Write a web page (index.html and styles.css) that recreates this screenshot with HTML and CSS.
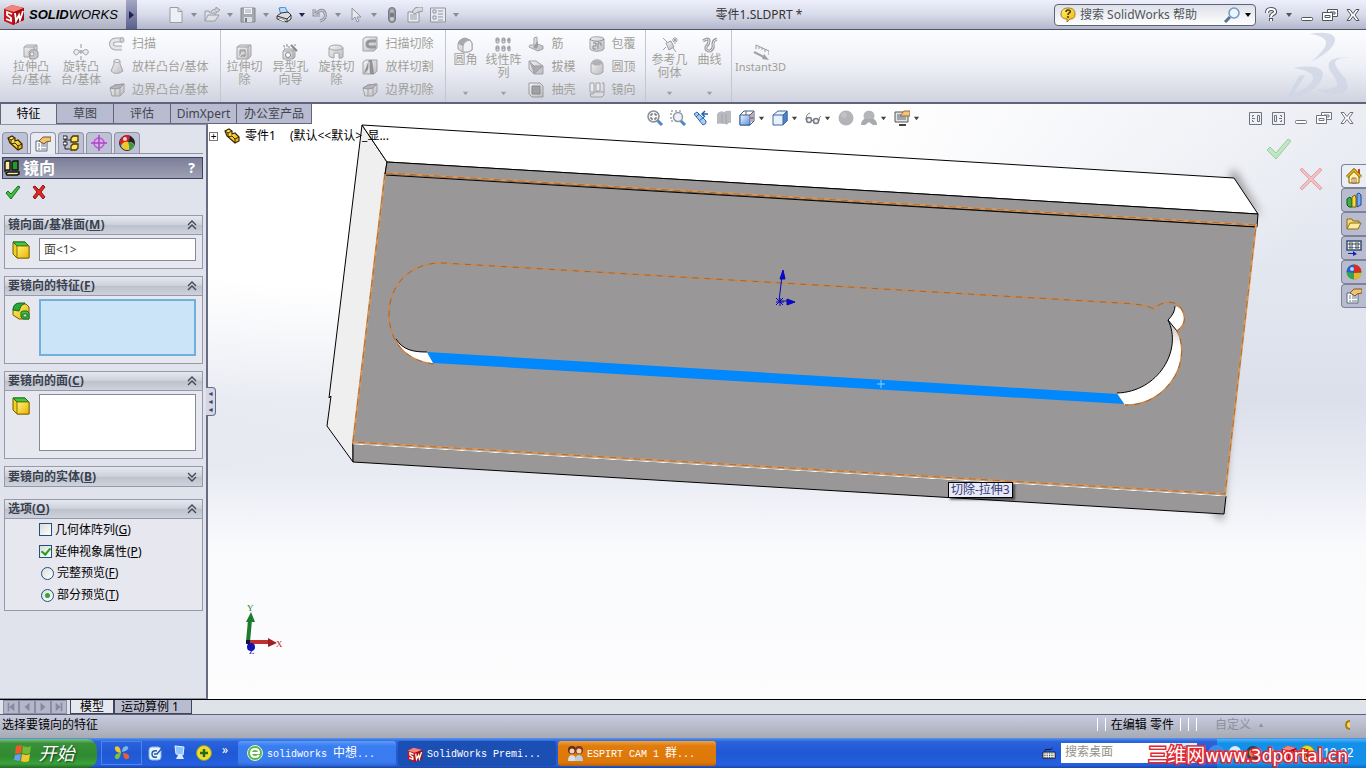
FILE: index.html
```html
<!DOCTYPE html>
<html lang="zh-CN">
<head>
    <meta charset="UTF-8">
    <meta name="viewport" content="width=device-width, initial-scale=1.0">
    <title>零件1.SLDPRT *</title>
    <link rel="stylesheet" href="styles.css">
</head>
<body>
    <!-- icon set -->
    <svg class="defs" aria-hidden="true">
        <defs>
            <linearGradient id="gold" x1="0" y1="0" x2="1" y2="1"><stop offset="0" stop-color="#fff27a"/><stop offset="1" stop-color="#eab400"/></linearGradient>
            <linearGradient id="gray" x1="0" y1="0" x2="1" y2="1"><stop offset="0" stop-color="#f4f4f4"/><stop offset="1" stop-color="#bcbcc0"/></linearGradient>
            <linearGradient id="blue" x1="0" y1="0" x2="1" y2="1"><stop offset="0" stop-color="#f2f8ff"/><stop offset="1" stop-color="#5b91dc"/></linearGradient>
        </defs>
        <symbol id="sw" viewBox="0 0 22 22"><path d="M1 5 9 1l12 3v12l-11 5-9-4z" fill="#c4161c"/><path d="M1 5 9 1l12 3-10 4z" fill="#f0857e"/><path d="M11 8 21 4v12l-11 5z" fill="#a30d12"/><path d="M9 10 4 8v3l4 3v3l-5-2M12 9l1 8 3-6 1 5 3-9" fill="none" stroke="#fff" stroke-width="1.800"/></symbol>
        <symbol id="down" viewBox="0 0 8 8"><path d="M1 2h6L4 6z" fill="currentColor"/></symbol>
        <symbol id="new" viewBox="0 0 16 16"><path d="M2 .5h8l4 4v11H2z" fill="#eef0f6" stroke="#9a9ca6"/><path d="M10 .5v4h4" fill="none" stroke="#9a9ca6"/></symbol>
        <symbol id="open" viewBox="0 0 16 16"><path d="M1 14V4h4l1 2h5v2M1 14l3-6h11l-4 6z" fill="#dfe0e6" stroke="#9a9ca6"/><path d="M7 5q1-3 5-3V0l4 3-4 3V4" fill="#d0d2da" stroke="#9a9ca6"/></symbol>
        <symbol id="save" viewBox="0 0 16 16"><path d="M1 1h14v14H1z" fill="#a6a8b2" stroke="#858791"/><path d="M4 1h8v6H4z" fill="#f0f1f6"/><path d="M4 10h8v5H4z" fill="#dcdde4"/><path d="M5 11h2v4H5z" fill="#777984"/><path d="M5 3h6M5 5h6" stroke="#aaa"/></symbol>
        <symbol id="print" viewBox="0 0 16 16"><path d="m3 1 6-1 3 6-7 2z" fill="#b8dcff" stroke="#4488c8"/><path d="m1 9 4-3 7-1 3 3v4l-4 3-10-3z" fill="#dcdde0" stroke="#333"/><path d="m1 9 10 3 4-4M11 12v3" fill="none" stroke="#333"/><path d="m3 11 6 2v2l-6-2z" fill="#fff" stroke="#555" stroke-width=".5"/></symbol>
        <symbol id="undo" viewBox="0 0 16 16"><path d="M2 2v6h6M3 7q8-7 10-1t-5 8" fill="none" stroke="#90929c" stroke-width="3"/><path d="M2 2v6h6M3 7q8-7 10-1t-5 8" fill="none" stroke="#d2d4de"/></symbol>
        <symbol id="cursor" viewBox="0 0 16 16"><path d="M4 1v12l3-3 2 5 2-1-2-4h4z" fill="#e6e8f0" stroke="#9294a0"/></symbol>
        <symbol id="light" viewBox="0 0 16 16"><rect x="4.500" y=".5" width="7" height="15" rx="3.500" fill="#92949c" stroke="#777985"/><circle cx="8" cy="4" r="2" fill="#b0b2ba"/><circle cx="8" cy="8" r="2" fill="#74767e"/><circle cx="8" cy="12" r="2" fill="#c8cad2"/></symbol>
        <symbol id="propgray" viewBox="0 0 16 16"><path d="M1 5h11v10H1z" fill="#eceef4" stroke="#92949e"/><path d="M3 8h7M3 10h7M3 12h7" stroke="#9a9ca6"/><path d="m5 5 3-4 3-1h5v4l-5 1-3 2z" fill="#d8dae0" stroke="#92949e"/></symbol>
        <symbol id="list" viewBox="0 0 16 16"><path d="M.5 1h15v14H.5z" fill="#e8eaf2" stroke="#9092a0"/><path d="M3 3h3v3H3zM3 9h3v3H3z" fill="none" stroke="#9092a0"/><path d="M8 4h5M8 7h5M8 10h5M8 13h5" stroke="#9092a0"/></symbol>
        <symbol id="lens" viewBox="0 0 16 16"><path d="m1 15 5-5" stroke="#5b7290" stroke-width="3"/><circle cx="10" cy="6" r="5" fill="#e7f6ff" stroke="#7896b8" stroke-width="1.500"/></symbol>
        <symbol id="tip" viewBox="0 0 16 16"><path d="M8 1c5 0 7 2 7 6s-2 5-5 5l-3 3v-3C3 12 1 10 1 7s2-6 7-6z" fill="url(#gold)" stroke="#a87a16"/><path d="M6 5q0-2 2-2c3 0 3 2 1 3q-1 1-1 2m0 1v2" fill="none" stroke="#4b3505" stroke-width="1.500"/></symbol>
        <symbol id="help" viewBox="0 0 16 16"><path d="M4 6q0-4 4-4c5 0 5 4 2 5q-2 1-2 3m0 1v3" fill="none" stroke="#50545e" stroke-width="4"/><path d="M4 6q0-4 4-4c5 0 5 4 2 5q-2 1-2 3m0 2v2" fill="none" stroke="#fff" stroke-width="2"/></symbol>
        <symbol id="min" viewBox="0 0 16 16"><rect x="2.500" y="10.500" width="11" height="3" rx="1" fill="#fff" stroke="currentColor"/></symbol>
        <symbol id="restore" viewBox="0 0 16 16"><path d="M5.500 2.500h10v7h-10z" fill="#fff" stroke="currentColor"/><path d="M8 5h5v2H8z" fill="none" stroke="currentColor"/><path d="M.5 5.500h10v8H.5z" fill="#fff" stroke="currentColor"/><path d="M3 8.500h5v2H3z" fill="none" stroke="currentColor"/></symbol>
        <symbol id="close" viewBox="0 0 16 16"><path d="M2 2.500h3l3 4 3-4h3L10 8l4 5.500h-3l-3-4-3 4H2L6 8z" fill="#fff" stroke="currentColor"/></symbol>
        <symbol id="paneleft" viewBox="0 0 16 16"><path d="M2.500 2.500h12v12h-12z" fill="none" stroke="currentColor"/><path d="M7 5.500H5.500V7M5.500 10v1.500H7M5 8.500h3M10.500 5.500h2v6h-2z" fill="none" stroke="currentColor"/></symbol>
        <symbol id="paneright" viewBox="0 0 16 16"><path d="M2.500 2.500h12v12h-12z" fill="none" stroke="currentColor"/><path d="M10 5.500h1.500V7M11.500 10v1.500H10M12 8.500H9M4.500 5.500h2v6h-2z" fill="none" stroke="currentColor"/></symbol>

        <symbol id="boss" viewBox="0 0 16 16"><path d="m1 3 3-2h10v10l-3 2H1z" fill="url(#gray)" stroke="#a6a6a8"/><path d="M1 3h10v10M11 3l3-2" fill="none" stroke="#a6a6a8"/><path d="m6 8 2-2h5l2 2v5l-3 2H7z" fill="#c8c8cc" stroke="#98989c"/><circle cx="9" cy="10" r="2" fill="#ececf0" stroke="#a0a0a4"/></symbol>
        <symbol id="revolve" viewBox="0 0 16 16"><path d="M8 0v4m0 2v4m0 2v4" stroke="#98989c"/><path d="M6 7C3 4 0 6 1 9s4 2 5-1h4c1 3 4 4 5 1s-2-5-5-2z" fill="#ececf0" stroke="#9c9ca0"/></symbol>
        <symbol id="sweep" viewBox="0 0 16 16"><path d="M13 4H7C1 4 1 12 7 12h6" fill="none" stroke="#a8a8ac" stroke-width="5"/><path d="M13 4H7C1 4 1 12 7 12h6" fill="none" stroke="#e6e6ea" stroke-width="3"/><ellipse cx="13" cy="4" rx="2" ry="2.500" fill="#d4d4d8" stroke="#a8a8ac"/></symbol>
        <symbol id="loft" viewBox="0 0 16 16"><path d="M5 2v3L2 12q5 5 12 0l-3-7V2z" fill="url(#gray)" stroke="#a6a6aa"/><ellipse cx="8" cy="2" rx="3" ry="1.500" fill="#f4f4f6" stroke="#a6a6aa"/></symbol>
        <symbol id="boundary" viewBox="0 0 16 16"><path d="m1 6 5-3 9-1v8l-4 4H3z" fill="url(#gray)" stroke="#a0a0a4"/><path d="M1 6q5 2 10 0l4-4-9 1z" fill="#b4b4ba" stroke="#98989e"/><path d="M11 6v8M6 7v7" fill="none" stroke="#a0a0a6"/></symbol>
        <symbol id="cut" viewBox="0 0 16 16"><path d="m1 3 3-2h11v11l-3 3H1z" fill="url(#gray)" stroke="#a2a2a6"/><path d="M1 3h11v12M12 3l3-2" fill="none" stroke="#a2a2a6"/><path d="M4 6h5v6H4z" fill="#bebec4" stroke="#909096"/><path d="m4 12 2-3h3" fill="none" stroke="#eee"/></symbol>
        <symbol id="hole" viewBox="0 0 16 16"><path d="m1 7 2-2h10v8l-2 2H1z" fill="url(#gray)" stroke="#a2a2a6"/><path d="M1 7h10v8M11 7l2-2" fill="none" stroke="#a2a2a6"/><circle cx="6" cy="11" r="2.500" fill="#fff" stroke="#88888e"/><path d="m9 1 6 6" stroke="#86868c" stroke-width="2"/><path d="M1 2h2M5 0v3M6 3h2M12 1h2M2 4h1" stroke="#86868c"/></symbol>
        <symbol id="revcut" viewBox="0 0 16 16"><path d="M1 4c0-4 14-4 14 0v9q-2 2-4 1V9H6v5q-3 0-5-2z" fill="url(#gray)" stroke="#a4a4a8"/><path d="M1 4c2 3 12 3 14 0" fill="none" stroke="#a4a4a8"/></symbol>
        <symbol id="sweepcut" viewBox="0 0 16 16"><path d="m1 3 3-2h11v11l-3 3H1z" fill="url(#gray)" stroke="#a2a2a6"/><path d="M14 5H9Q5 5 5 8t4 3h5" fill="none" stroke="#96969c" stroke-width="3"/></symbol>
        <symbol id="loftcut" viewBox="0 0 16 16"><path d="m1 3 3-2h11v11l-3 3H1z" fill="url(#gray)" stroke="#a2a2a6"/><path d="M7 1h3l2 14H8L7 9l-4 5H2z" fill="#909096"/><path d="M7 3v11" stroke="#f4f4f4"/></symbol>
        <symbol id="fillet" viewBox="0 0 16 16"><path d="M1 7Q2 2 8 1l5 2 2 3v7l-4 2H5l-4-3z" fill="url(#gray)" stroke="#a0a0a4"/><path d="M1 7Q2 2 8 1l5 2q-6 0-7 6z" fill="#a8a8ae"/><path d="M6 15V9q1-5 7-6l2 3v7l-4 2z" fill="#f2f2f4" stroke="#a4a4a8"/></symbol>
        <symbol id="pattern" viewBox="0 0 16 16"><g fill="#dddde2" stroke="#929298"><rect x="1" y="1" width="3" height="5" rx="1"/><rect x="7" y="1" width="3" height="5" rx="1"/><rect x="13" y="1" width="2" height="5" rx="1"/><rect x="1" y="9" width="3" height="5" rx="1"/><rect x="7" y="9" width="3" height="5" rx="1"/><rect x="13" y="9" width="2" height="5" rx="1"/></g><path d="M1 3h3M7 3h3M12 3h3M1 11h3M7 11h3M12 11h3" stroke="#88888e"/></symbol>
        <symbol id="rib" viewBox="0 0 16 16"><path d="M6 9V2l3-1v7l6 2v3l-5 2-9-4 1-2z" fill="url(#gray)" stroke="#a2a2a6"/><path d="m5 11 5-6v6l-2 2z" fill="#9c9ca2"/></symbol>
        <symbol id="draft" viewBox="0 0 16 16"><path d="M1 2h7l7 5v8H6L1 10z" fill="url(#gray)" stroke="#a0a0a4"/><path d="M1 2 6 7v8M6 7h9L6 15" fill="#aaaab0" stroke="#a0a0a4"/></symbol>
        <symbol id="shell" viewBox="0 0 16 16"><path d="M1 1h11l3 3v11H4l-3-3z" fill="url(#gray)" stroke="#98989e"/><path d="M4 4h8v8H4z" fill="#a0a0a6" stroke="#88888e"/></symbol>
        <symbol id="wrap" viewBox="0 0 16 16"><path d="M1 3c0-3 14-3 14 0v10c-2 3-12 3-14 0z" fill="url(#gray)" stroke="#a4a4a8"/><path d="M1 3c2 3 12 3 14 0M4 7h3v3H4v3h3m2 0V7h3v3" fill="none" stroke="#88888e"/></symbol>
        <symbol id="dome" viewBox="0 0 16 16"><path d="M2 6c0-7 12-7 12 0v7c-2 3-10 3-12 0z" fill="url(#gray)" stroke="#a4a4a8"/><path d="M3 5c0-5 10-5 10 0q-5 3-10 0" fill="#b0b0b6"/></symbol>
        <symbol id="mirror" viewBox="0 0 16 16"><path d="M1 1h4v9H1zM7 1h4v8H7z" fill="#ececf0" stroke="#a0a0a6"/><path d="M1 12h3l2-2h9v3l-2 2H2zM13 1h2v9" fill="#dcdce0" stroke="#a0a0a6"/></symbol>
        <symbol id="refgeo" viewBox="0 0 16 16"><path d="m4 6 5-2 3 6-5 3z" fill="url(#gray)" stroke="#9e9ea2"/><path d="m1 1 4 4m6 6 3 4M13 0v7m-3-4h6m-5-2 4 4m0-4-4 4M1 13l3-3" stroke="#a0a0a6"/></symbol>
        <symbol id="curve" viewBox="0 0 16 16"><path d="M1 4q6-4 6 0 0 3-3 6-1 4 4 4 4-2 3-7 0-4 4-5" fill="none" stroke="#96969c" stroke-width="3"/><path d="M1 4q6-4 6 0 0 3-3 6-1 4 4 4 4-2 3-7 0-4 4-5" fill="none" stroke="#e8e8ec"/></symbol>
        <symbol id="instant" viewBox="0 0 16 16"><path d="M3 5V1l13 6v4M6 3v2m3-1v2m3-1v3" fill="none" stroke="#98989e"/><path d="m1 8 10 5" stroke="#a0a0a6" stroke-width="2"/><path d="m11 10 5 6-7-1z" fill="#a0a0a6"/></symbol>

        <symbol id="zoomfit" viewBox="0 0 16 16"><path d="m10 10 5 5" stroke="#4f86c8" stroke-width="3"/><circle cx="6.500" cy="6.500" r="5.500" fill="#f4f6fa" stroke="#8a8e98" stroke-width="1.500"/><path d="M4 6V4h2M7 4h2v2M9 7v2H7M6 9H4V7" fill="none" stroke="#555"/></symbol>
        <symbol id="zoomarea" viewBox="0 0 16 16"><path d="M1 1h10v10H1z" fill="none" stroke="#777" stroke-dasharray="2 2"/><path d="m10 10 5 5" stroke="#4f86c8" stroke-width="3"/><circle cx="8" cy="7" r="4.500" fill="#edf3fa" stroke="#9297a2" stroke-width="1.500"/></symbol>
        <symbol id="prevview" viewBox="0 0 16 16"><path d="m1 4 3-2 9 9q1 3-3 4z" fill="#a6cef4" stroke="#336ba8"/><path d="m3 7 3-3m0 7 5-4" stroke="#2f66a2"/><path d="M9 4h6M12 1 9 4l3 3" fill="none" stroke="#2364ae" stroke-width="1.500"/></symbol>
        <symbol id="section" viewBox="0 0 16 16"><path d="M1 4q3-4 7-2 3-2 7-1v12q-3-1-4 2-2-2-4-1-3-1-6 0z" fill="#b8babf"/><path d="M6 4v9m4-9v10" stroke="#a4a6ab"/></symbol>
        <symbol id="orient" viewBox="0 0 16 16"><path d="m1 5 4-4h10v10l-4 4H1z" fill="#fff" stroke="#365f92"/><path d="M1 5h10v10H1z" fill="url(#blue)" stroke="#365f92"/><path d="m11 5 4-4M7 1v4M11 8h4M13 3v9" stroke="#9a4a54"/></symbol>
        <symbol id="shaded" viewBox="0 0 16 16"><path d="m1 5 5-4h9v10l-4 4H1z" fill="#e8f2ff" stroke="#41699e"/><path d="m11 5 4-4v10l-4 4z" fill="#4a83d0" stroke="#41699e"/><path d="M1 5h10" stroke="#41699e"/></symbol>
        <symbol id="glasses" viewBox="0 0 16 16"><circle cx="4" cy="10" r="2.500" fill="#f4f4f8" stroke="#777b85" stroke-width="1.500"/><circle cx="11" cy="11" r="2.500" fill="#f4f4f8" stroke="#777b85" stroke-width="1.500"/><path d="M1 10q0-6 4-7m2 8q1-2 2 0m5 0q0-5 2-5" fill="none" stroke="#777b85"/></symbol>
        <symbol id="sphere" viewBox="0 0 16 16"><circle cx="8" cy="8" r="7.500" fill="#b2b4b8"/><circle cx="6" cy="5" r="3" fill="#c0c2c6"/></symbol>
        <symbol id="scene" viewBox="0 0 16 16"><circle cx="8" cy="6" r="5.500" fill="#b4b6ba"/><path d="M3 9q-3 2-3 6h4l4-3 4 3h4q0-4-3-6z" fill="#a8aab0"/></symbol>
        <symbol id="viewset" viewBox="0 0 16 16"><path d="M1 2h13v10H1z" fill="#e5e5e5" stroke="#555"/><path d="M3 4h9v6H3z" fill="#9ca6b4"/><path d="M5 15h7" stroke="#444" stroke-width="2"/><path d="m6 6 4-5h6v5H9z" fill="#f3c47c" stroke="#986b35"/></symbol>

        <symbol id="part" viewBox="0 0 16 16"><path d="m1 3 4-2 3 2v3l3-1 4 4v4l-4 2-8-7z" fill="url(#gold)" stroke="#3b2500" stroke-width="1.200"/><path d="m1 3 3 2 4-2M4 5v4l4-1 3 3 4-2m-4 2v4" fill="none" stroke="#3b2500"/></symbol>
        <symbol id="prop" viewBox="0 0 16 16"><path d="M1 5h11v10H1z" fill="#fff" stroke="#5c6678"/><path d="M3 8h2m1 0h5M3 10h2m1 0h5M3 13h2m1 0h5" stroke="#62789a"/><path d="m4 5 4-4h8v4l-5 1-2 2z" fill="#f3c173" stroke="#7a5828"/></symbol>
        <symbol id="config" viewBox="0 0 16 16"><path d="M2 1v13h5M2 5h6" fill="none" stroke="#222"/><path d="M0 1h4v3H0zM0 7h4v3H0z" fill="#fff" stroke="#222"/><path d="m8 3 2-2h5v5l-2 1H8zM8 11l2-2h5v4l-2 2H8z" fill="#ffe65c" stroke="#4c3900" stroke-width="1.300"/></symbol>
        <symbol id="target" viewBox="0 0 16 16"><circle cx="8" cy="8" r="5" fill="none" stroke="#c452dc" stroke-width="1.500"/><path d="M8 0v16M0 8h16" stroke="#b63ed0" stroke-width="1.500"/></symbol>
        <symbol id="ball" viewBox="0 0 16 16"><circle cx="8" cy="8" r="7.500" fill="#35a34a"/><path d="M8 .5A7.500 7.500 0 0 1 15.500 8L8 9z" fill="#d82c27"/><path d="M8 .5A7.500 7.500 0 0 0 .5 8L8 9z" fill="#295ed0"/><path d="M8 9h7.500A7.500 7.500 0 0 1 8 15.500z" fill="#e8b42a"/><circle cx="6" cy="5" r="2" fill="#fff" opacity=".7"/></symbol>
        <symbol id="ball2" viewBox="0 0 16 16"><circle cx="8" cy="8" r="7.500" fill="#2864d8" stroke="#333"/><path d="M2 4q5-6 9-3 0 8-10 8-1-2 1-5z" fill="#d82020"/><path d="M11 1q6 4 4 9-3-4-6-3 2-3 2-6z" fill="#222"/><path d="M2 11q2-5 7-4 6 0 6 3-1 5-7 5-4 0-6-4z" fill="#ecc82c"/><path d="M9 7q4 0 6 3-1 4-5 5 1-4-1-8z" fill="#32994a"/><circle cx="6" cy="4" r="2" fill="#fff" opacity=".8"/></symbol>
        <symbol id="mirrorcolor" viewBox="0 0 16 16"><path d="M1 3q0-2 2-2h3v9H3l-2 1z" fill="#f7ee9a" stroke="#111" stroke-width="1.400"/><path d="M8 3q0-2 2-2h4v9H8z" fill="#28982e" stroke="#111" stroke-width="1.400"/><path d="m2 13 2-1h11v2l-2 1H3z" fill="#f7ee9a" stroke="#111" stroke-width="1.400"/></symbol>
        <symbol id="ok" viewBox="0 0 16 16"><path d="m1 9 2-2 3 3 7-8 2 1-9 12z" fill="#3cc13c" stroke="#176f1c"/></symbol>
        <symbol id="cancel" viewBox="0 0 16 16"><path d="m2 3 2-1 4 4 4-5 2 2-4 5 4 5-2 2-4-5-4 5-2-2 4-5z" fill="#e02a20" stroke="#8c1510"/></symbol>
        <symbol id="bigok" viewBox="0 0 26 22"><path d="m1 12 3-3 6 6L22 1l3 2-15 18z" fill="#c0e8c0" stroke="#9ccba0"/></symbol>
        <symbol id="bigcancel" viewBox="0 0 24 24"><path d="m1 3 2-2 9 9 9-9 2 2-9 9 9 9-2 2-9-9-9 9-2-2 9-9z" fill="#f0c0c2" stroke="#e0a4a6"/></symbol>
        <symbol id="face" viewBox="0 0 18 18"><path d="M1 1h12l4 4v12H5l-4-4z" fill="#f0d020" stroke="#6f5a00"/><path d="M1 1h12l4 4H5z" fill="#3dca3d" stroke="#187024"/><path d="M5 5h12v12H5z" fill="url(#gold)" stroke="#8a7000"/></symbol>
        <symbol id="feature" viewBox="0 0 18 18"><path d="m1 7 5-5h8l3 3v12H7l-6-4z" fill="url(#gold)" stroke="#745c00"/><path d="M1 8Q1 1 8 1h5Q8 3 7 9z" fill="#28a83a" stroke="#126a20"/><path d="m9 10 2-1h4l2 2v6h-6l-2-2z" fill="#47c04c" stroke="#126a20"/><path d="M11 12h4v3h-4z" fill="#c8f0b0" stroke="#126a20"/></symbol>
        <symbol id="up2" viewBox="0 0 10 10"><path d="m1 5 4-4 4 4M1 9l4-4 4 4" fill="none" stroke="#3f4654" stroke-width="1.300"/></symbol>
        <symbol id="down2" viewBox="0 0 10 10"><path d="m1 1 4 4 4-4M1 5l4 4 4-4" fill="none" stroke="#3f4654" stroke-width="1.300"/></symbol>

        <symbol id="home" viewBox="0 0 16 16"><path d="M3 8v7h10V8L8 3z" fill="#fff2a4" stroke="#7c5a00"/><path d="M12 1h2v6l-2-2z" fill="#c8442a"/><path d="M1 9 8 2l7 7" fill="none" stroke="#7c5a00" stroke-width="3"/><path d="M1 9 8 2l7 7" fill="none" stroke="#f0b820" stroke-width="1.500"/><path d="M6 10h4v5H6z" fill="#fff" stroke="#7c3a00" stroke-width=".7"/><path d="M8 10v5" stroke="#7c3a00" stroke-width=".7"/></symbol>
        <symbol id="library" viewBox="0 0 16 16"><path d="m1 7 3-2 2 3v7H3l-2-2z" fill="#38b048" stroke="#0a5a18"/><path d="m6 5 3-2 1 3v9H6z" fill="#f6d848" stroke="#7a6000"/><path d="m11 2 2-1 2 2v10l-4 2z" fill="#78a8f0" stroke="#23488a"/></symbol>
        <symbol id="folder" viewBox="0 0 16 16"><path d="M1 13V3h5l1 2h6v3" fill="#f8d970" stroke="#8d6a14"/><path d="m1 13 3-6h11l-3 6z" fill="#ffeca0" stroke="#8d6a14"/></symbol>
        <symbol id="palette" viewBox="0 0 16 16"><path d="M1 1h14v9H1z" fill="#fff" stroke="#344c70" stroke-width="1.500"/><path d="M3 3h4v2H3zM9 3h4v2H9zM3 7h4v1H3zM9 7h4v1H9z" fill="#e8d44c" stroke="#344c70"/><path d="M2 13h5v-2l4 3-4 2v-2H2z" fill="#1822b4"/></symbol>

        <symbol id="flag" viewBox="0 0 20 20"><path d="m3 3 6-1-1 8-6 1z" fill="#ee5a28"/><path d="m10 3q5 2 8 0l-1 7q-4 2-8 0z" fill="#75b834"/><path d="m2 12 6-1-1 7-6-1z" fill="#6a9cf8"/><path d="m9 11q4 2 8 0l-1 7q-4 2-8 0z" fill="#f6c42c"/></symbol>
        <symbol id="butterfly" viewBox="0 0 16 16"><path d="M7 8Q0 7 1 2q5-3 6 6z" fill="#f0c42a"/><path d="M8 7q0-6 5-6 4 4-5 6z" fill="#74b8f4"/><path d="M7 8Q0 8 1 13q4 4 6-5z" fill="#78c43c"/><path d="M9 8q7 0 6 5-5 4-6-5z" fill="#ee5c34"/></symbol>
        <symbol id="compose" viewBox="0 0 16 16"><rect x="1" y="2" width="12" height="13" rx="3" fill="#e6f3ff" stroke="#8bb5e4"/><path d="M9 6q-5-1-5 3t5 3M6 9h3l6-7" fill="none" stroke="#255ca8" stroke-width="1.500"/></symbol>
        <symbol id="monitor" viewBox="0 0 16 16"><path d="m3 1 9 1-1 8-7-1z" fill="#8cc4ff" stroke="#e5f4ff"/><path d="M6 10h4l2 4H4z" fill="#d8eaff"/></symbol>
        <symbol id="safe" viewBox="0 0 16 16"><circle cx="8" cy="8" r="7.500" fill="#f0da32" stroke="#8b9f1c"/><path d="M8 4v8M4 8h8" stroke="#256a18" stroke-width="2.500"/></symbol>
        <symbol id="ie" viewBox="0 0 16 16"><circle cx="8" cy="8" r="7.500" fill="#58b84c" stroke="#dff5d8"/><path d="M4 8h8q0-4-4-4T4 8t4 4q3 0 4-2" fill="none" stroke="#fff" stroke-width="2"/></symbol>
        <symbol id="people" viewBox="0 0 16 16"><circle cx="5" cy="5" r="4" fill="#5a2a18"/><circle cx="5" cy="6" r="2.500" fill="#fcd0ac"/><circle cx="12" cy="5" r="4" fill="#7a3a20"/><circle cx="12" cy="6" r="2.500" fill="#fcd0ac"/><path d="M1 16q0-6 4-6t4 6z" fill="#cfe0f4"/><path d="M8 16q0-6 4-6t4 6z" fill="#b8cce4"/></symbol>
        <symbol id="keyboard" viewBox="0 0 16 16"><path d="M1 7h14v7H1z" fill="#fff" stroke="#111"/><path d="M2 9h12M2 11h12M2 13h12" stroke="#111" stroke-dasharray="1 1"/><path d="M3 6q0-3 4-2t5-2" fill="none" stroke="#111"/></symbol>
    </svg>

    <header class="titlebar">
        <div class="brand">
            <svg class="brand-icon"><use href="#sw"/></svg>
            <span class="brand-name"><b>SOLID</b>WORKS</span>
        </div>
        <button class="brand-arrow" aria-label="菜单"></button>
        <div class="quick">
            <button aria-label="新建"><svg><use href="#new"/></svg></button><button class="drop" aria-label="新建选项"><svg><use href="#down"/></svg></button>
            <button aria-label="打开"><svg><use href="#open"/></svg></button><button class="drop" aria-label="打开选项"><svg><use href="#down"/></svg></button>
            <button aria-label="保存"><svg><use href="#save"/></svg></button><button class="drop" aria-label="保存选项"><svg><use href="#down"/></svg></button>
            <button aria-label="打印"><svg><use href="#print"/></svg></button><button class="drop dark" aria-label="打印选项"><svg><use href="#down"/></svg></button>
            <button aria-label="撤消"><svg><use href="#undo"/></svg></button><button class="drop" aria-label="撤消选项"><svg><use href="#down"/></svg></button>
            <button aria-label="选择"><svg><use href="#cursor"/></svg></button><button class="drop" aria-label="选择选项"><svg><use href="#down"/></svg></button>
            <button class="wide" aria-label="重建模型"><svg><use href="#light"/></svg></button>
            <button class="wide" aria-label="文件属性"><svg><use href="#propgray"/></svg></button>
            <button aria-label="选项"><svg><use href="#list"/></svg></button><button class="drop" aria-label="更多"><svg><use href="#down"/></svg></button>
        </div>
        <h1 class="doc-title">零件1.SLDPRT *</h1>
        <form class="help-search">
            <svg><use href="#tip"/></svg>
            <input type="text" aria-label="搜索帮助" value="搜索 SolidWorks 帮助">
            <button type="button" aria-label="搜索"><svg><use href="#lens"/></svg></button>
            <button type="button" class="small" aria-label="搜索范围"><svg><use href="#down"/></svg></button>
        </form>
        <div class="window-btns">
            <button aria-label="帮助"><svg><use href="#help"/></svg></button>
            <button class="small" aria-label="帮助选项"><svg><use href="#down"/></svg></button>
            <button aria-label="最小化"><svg><use href="#min"/></svg></button>
            <button aria-label="还原"><svg><use href="#restore"/></svg></button>
            <button aria-label="关闭"><svg><use href="#close"/></svg></button>
        </div>
    </header>

    <section class="ribbon">
        <div class="group">
            <button class="big big-wide"><svg><use href="#boss"/></svg>拉伸凸<br>台/基体</button>
            <button class="big big-wide"><svg><use href="#revolve"/></svg>旋转凸<br>台/基体</button>
            <div class="stack">
                <button><svg><use href="#sweep"/></svg>扫描</button>
                <button><svg><use href="#loft"/></svg>放样凸台/基体</button>
                <button><svg><use href="#boundary"/></svg>边界凸台/基体</button>
            </div>
        </div>
        <div class="group">
            <button class="big"><svg><use href="#cut"/></svg>拉伸切<br>除</button>
            <button class="big"><svg><use href="#hole"/></svg>异型孔<br>向导</button>
            <button class="big"><svg><use href="#revcut"/></svg>旋转切<br>除</button>
            <div class="stack">
                <button><svg><use href="#sweepcut"/></svg>扫描切除</button>
                <button><svg><use href="#loftcut"/></svg>放样切割</button>
                <button><svg><use href="#boundary"/></svg>边界切除</button>
            </div>
        </div>
        <div class="group group-tight">
            <button class="big big-menu"><svg><use href="#fillet"/></svg>圆角<svg class="more"><use href="#down"/></svg></button>
            <button class="big big-menu"><svg><use href="#pattern"/></svg>线性阵<br>列<svg class="more"><use href="#down"/></svg></button>
            <div class="stack">
                <button><svg><use href="#rib"/></svg>筋</button>
                <button><svg><use href="#draft"/></svg>拔模</button>
                <button><svg><use href="#shell"/></svg>抽壳</button>
            </div>
            <div class="stack stack-next">
                <button><svg><use href="#wrap"/></svg>包覆</button>
                <button><svg><use href="#dome"/></svg>圆顶</button>
                <button><svg><use href="#mirror"/></svg>镜向</button>
            </div>
        </div>
        <div class="group group-ref">
            <button class="big big-menu"><svg><use href="#refgeo"/></svg>参考几<br>何体<svg class="more"><use href="#down"/></svg></button>
            <button class="big big-menu"><svg><use href="#curve"/></svg>曲线<svg class="more"><use href="#down"/></svg></button>
        </div>
        <div class="group group-last">
            <button class="big big-latin"><svg><use href="#instant"/></svg>Instant3D</button>
        </div>
        <svg class="ds-logo" viewBox="0 0 72 70" aria-hidden="true">
            <path d="M24 2q24-4 26 5 1 10-24 23 15-13 15-19 0-7-17-9z"/>
            <path d="M8 36q30-5 30 7Q35 60 0 69L14 44l6-1L9 62q18-8 19-16 0-7-20-10z"/>
            <path d="M70 26q-20-1-20 5 0 4 10 15 9 16-11 16-12 0-18-5 20 1 21-4 1-4-7-14-8-16 25-13z"/>
        </svg>
    </section>

    <main class="workspace">
        <aside class="side">
            <nav class="cmd-tabs">
                <button class="on">特征</button>
                <button>草图</button>
                <button>评估</button>
                <button class="t-wide">DimXpert</button>
                <button class="t-last">办公室产品</button>
            </nav>
            <div class="panel">
                <nav class="mgr-tabs">
                    <button aria-label="设计树"><svg><use href="#part"/></svg></button>
                    <button class="on" aria-label="属性"><svg><use href="#prop"/></svg></button>
                    <button aria-label="配置"><svg><use href="#config"/></svg></button>
                    <button aria-label="尺寸专家"><svg><use href="#target"/></svg></button>
                    <button aria-label="外观"><svg><use href="#ball2"/></svg></button>
                </nav>
                <div class="pm-title">
                    <svg><use href="#mirrorcolor"/></svg>
                    <h2>镜向</h2>
                    <button aria-label="帮助">?</button>
                </div>
                <div class="pm-confirm">
                    <button aria-label="确定"><svg><use href="#ok"/></svg></button>
                    <button aria-label="取消"><svg><use href="#cancel"/></svg></button>
                </div>

                <section class="box">
                    <div class="box-head"><label for="plane">镜向面/基准面(<u>M</u>)</label><button aria-label="折叠"><svg><use href="#up2"/></svg></button></div>
                    <div class="box-body">
                        <svg><use href="#face"/></svg>
                        <input id="plane" type="text" value="面&lt;1&gt;">
                    </div>
                </section>
                <section class="box">
                    <div class="box-head"><label for="features">要镜向的特征(<u>F</u>)</label><button aria-label="折叠"><svg><use href="#up2"/></svg></button></div>
                    <div class="box-body">
                        <svg><use href="#feature"/></svg>
                        <textarea id="features" class="active"></textarea>
                    </div>
                </section>
                <section class="box">
                    <div class="box-head"><label for="faces">要镜向的面(<u>C</u>)</label><button aria-label="折叠"><svg><use href="#up2"/></svg></button></div>
                    <div class="box-body">
                        <svg><use href="#face"/></svg>
                        <textarea id="faces"></textarea>
                    </div>
                </section>
                <section class="box box-closed">
                    <div class="box-head"><span>要镜向的实体(<u>B</u>)</span><button aria-label="展开"><svg><use href="#down2"/></svg></button></div>
                </section>
                <section class="box">
                    <div class="box-head"><span>选项(<u>O</u>)</span><button aria-label="折叠"><svg><use href="#up2"/></svg></button></div>
                    <div class="options">
                        <label><input type="checkbox">几何体阵列(<u>G</u>)</label>
                        <label><input type="checkbox" checked>延伸视象属性(<u>P</u>)</label>
                        <label class="radio"><input type="radio" name="preview">完整预览(<u>F</u>)</label>
                        <label class="radio"><input type="radio" name="preview" checked>部分预览(<u>T</u>)</label>
                    </div>
                </section>
            </div>
        </aside>

        <section class="view">
            <svg class="model" viewBox="208 104 1158 595" preserveAspectRatio="xMinYMin meet" aria-hidden="true">
                <defs>
                    <filter id="soft" x="-50%" y="-50%" width="200%" height="200%"><feGaussianBlur stdDeviation="4"/></filter>
                    <linearGradient id="inner" x1="0" y1="0" x2="0" y2="1"><stop offset="0" stop-color="#b8b6b8"/><stop offset=".3" stop-color="#fff"/></linearGradient>
                </defs>
                <path d="M1234 168 1262 216 1252 210 1228 180zM1232 400 1223 522 1212 512 1222 400z" fill="#777" opacity=".7" filter="url(#soft)"/>
                <g stroke="#000" stroke-width="1" stroke-linejoin="round">
                    <path d="M362 125 387 162 385 174 353 443V462L327 426 331 396 329 398z" fill="#efefef"/>
                    <path d="M362 125 1234 178 1258 214 387 162z" fill="#fff"/>
                    <path d="M387 162 1258 214 1257 227 385 174z" fill="#9a9799"/>
                    <path d="M353 444 1226 496 1224 514 353 462z" fill="#9a9799"/>
                </g>
                <path d="M385 174 1256 227 1225 495 353 443z" fill="#9a9799"/>
                <path d="M385 175 1256 227" stroke="#000"/>
                <path d="M353 444 1226 496" stroke="#fff"/>
                <path d="M386 173 1256 225 1225 494 353 442 385 174" fill="none" stroke="#d6985c" stroke-width="2"/>
                <path d="M386 173 1256 225 1225 494 353 442 385 174" fill="none" stroke="#a8703c" stroke-dasharray="7 5"/>
                <path d="M396 339C403 350 413 352 427 352L434 364C415 363 402 354 396 339z" fill="#fff"/>
                <path d="M396 339C403 350 413 352 427 352" fill="none" stroke="#000"/>
                <path d="M1117 393C1158 392 1183 350 1168 320L1177 331C1184 344 1183 362 1175 376 1164 395 1145 406 1125 405z" fill="url(#inner)"/>
                <path d="M1175 306Q1175 313 1168 320L1177 331C1187 326 1187 309 1175 306z" fill="#fff"/>
                <path d="M1117 393C1158 392 1183 350 1168 320L1177 331M1168 320Q1175 313 1175 306" fill="none" stroke="#000"/>
                <path d="M427 352 1117 394 1124 404 433 363z" fill="#0088fc"/>
                <path d="M434 364C405 361 389 341 389 314 389 285 410 262 443 263L1120 303Q1145 304 1154 309C1161 301 1177 299 1182 310 1187 319 1184 326 1177 331 1184 344 1183 362 1175 376 1164 395 1145 406 1125 405" fill="none" stroke="#cc8848" stroke-width="1.500"/>
                <path d="M434 364C405 361 389 341 389 314 389 285 410 262 443 263L1120 303Q1145 304 1154 309C1161 301 1177 299 1182 310 1187 319 1184 326 1177 331 1184 344 1183 362 1175 376 1164 395 1145 406 1125 405" fill="none" stroke="#946a44" stroke-dasharray="6 6"/>
                <path d="M881 380v8M877 384h8" stroke="#8ad4ff"/>
                <g stroke="#0808b8" fill="#0808d0">
                    <path d="M779 301 782 276M779 301h10M776 298l7 7M783 298l-7 7M776 302h8M780 298v8"/>
                    <path d="m780 279 3-9 2 9zM787 299l8 3-8 3z"/>
                </g>
                <!-- axis triad -->
                <path d="m248 642 2-22" stroke="#1e7a2c" stroke-width="4"/>
                <path d="m246 622 5-10 4 10z" fill="#1e7a2c"/>
                <path d="M250 642h20" stroke="#c03030" stroke-width="4"/>
                <path d="m268 638 9 5-9 4z" fill="#a02020"/>
                <circle cx="251" cy="647" r="4" fill="#1414b0"/>
                <path d="M246 640h4v4h-4z" fill="#101040"/>
                <text class="axis ay" x="247" y="611">Y</text>
                <text class="axis ax" x="276" y="647">X</text>
                <text class="axis az" x="249" y="654">Z</text>
            </svg>
            <button class="splitter" aria-label="折叠面板">◂<br>◂<br>◂</button>
            <div class="tree">
                <button class="plus" aria-label="展开">+</button>
                <svg><use href="#part"/></svg>
                <span>零件1</span><span class="state">(默认&lt;&lt;默认&gt;_显...</span>
            </div>
            <div class="hud">
                <button aria-label="整屏显示"><svg><use href="#zoomfit"/></svg></button>
                <button aria-label="局部放大"><svg><use href="#zoomarea"/></svg></button>
                <button aria-label="上一视图"><svg><use href="#prevview"/></svg></button>
                <button aria-label="剖面视图"><svg><use href="#section"/></svg></button>
                <button class="has-menu" aria-label="视图定向"><svg><use href="#orient"/></svg><svg class="mini"><use href="#down"/></svg></button>
                <button class="has-menu" aria-label="显示样式"><svg><use href="#shaded"/></svg><svg class="mini"><use href="#down"/></svg></button>
                <button class="has-menu" aria-label="隐藏项目"><svg><use href="#glasses"/></svg><svg class="mini"><use href="#down"/></svg></button>
                <button aria-label="编辑外观"><svg><use href="#sphere"/></svg></button>
                <button class="has-menu" aria-label="应用布景"><svg><use href="#scene"/></svg><svg class="mini"><use href="#down"/></svg></button>
                <button class="has-menu" aria-label="视图设定"><svg><use href="#viewset"/></svg><svg class="mini"><use href="#down"/></svg></button>
            </div>
            <div class="doc-btns">
                <button aria-label="左窗格"><svg><use href="#paneleft"/></svg></button>
                <button aria-label="右窗格"><svg><use href="#paneright"/></svg></button>
                <button aria-label="最小化"><svg><use href="#min"/></svg></button>
                <button aria-label="还原"><svg><use href="#restore"/></svg></button>
                <button aria-label="关闭"><svg><use href="#close"/></svg></button>
            </div>
            <button class="corner-ok" aria-label="确定"><svg><use href="#bigok"/></svg></button>
            <button class="corner-cancel" aria-label="取消"><svg><use href="#bigcancel"/></svg></button>
            <nav class="task-pane">
                <button class="on" aria-label="资源"><svg><use href="#home"/></svg></button>
                <button aria-label="设计库"><svg><use href="#library"/></svg></button>
                <button aria-label="文件探索器"><svg><use href="#folder"/></svg></button>
                <button aria-label="视图调色板"><svg><use href="#palette"/></svg></button>
                <button aria-label="外观"><svg><use href="#ball"/></svg></button>
                <button aria-label="自定义属性"><svg><use href="#prop"/></svg></button>
            </nav>
            <div class="tooltip">切除-拉伸3</div>
        </section>
    </main>

    <nav class="model-tabs">
        <div class="nav-btns">
            <button aria-label="第一个"><svg viewBox="0 0 12 12"><path d="M2 1h2v10H2zM10 1v10L4 6z"/></svg></button>
            <button aria-label="上一个"><svg viewBox="0 0 12 12"><path d="M9 1v10L3 6z"/></svg></button>
            <button aria-label="下一个"><svg viewBox="0 0 12 12"><path d="M3 1v10l6-5z"/></svg></button>
            <button aria-label="最后一个"><svg viewBox="0 0 12 12"><path d="M2 1v10l6-5zM8 1h2v10H8z"/></svg></button>
        </div>
        <button class="m-tab on">模型</button>
        <button class="m-tab m-long">运动算例 1</button>
    </nav>
    <footer class="status">
        <span class="status-msg">选择要镜向的特征</span>
        <span class="bars"></span>
        <span>在编辑 零件</span>
        <span class="bars bars-three"></span>
        <button class="custom">自定义<span class="tri">▴</span></button>
        <span class="moon"></span>
    </footer>

    <div class="taskbar">
        <button class="start"><svg><use href="#flag"/></svg>开始</button>
        <div class="ql-box"><button aria-label="浏览器"><svg><use href="#butterfly"/></svg></button></div>
        <div class="ql">
            <button aria-label="撰写"><svg><use href="#compose"/></svg></button>
            <button aria-label="显示桌面"><svg><use href="#monitor"/></svg></button>
            <button aria-label="安全"><svg><use href="#safe"/></svg></button>
            <button class="ql-more" aria-label="更多">»</button>
        </div>
        <div class="tasks">
            <button><svg><use href="#ie"/></svg><span>solidworks <span class="han">中想</span>...</span></button>
            <button class="pressed"><svg><use href="#sw"/></svg><span>SolidWorks Premi...</span></button>
            <button class="alert"><svg><use href="#people"/></svg><span>ESPIRT CAM 1 <span class="han">群</span>...</span></button>
        </div>
        <svg class="kbd"><use href="#keyboard"/></svg>
        <div class="desk-search">
            <input type="text" aria-label="搜索桌面" value="搜索桌面">
            <button aria-label="搜索"><svg><use href="#lens"/></svg></button>
        </div>
        <div class="tray">
            <span class="tray-arrow">‹</span>
            <svg><circle cx="8" cy="7" r="6" fill="#d8eefc"/></svg>
            <svg><circle cx="8" cy="8" r="7" fill="#344050"/><circle cx="8" cy="8" r="4" fill="#e08040"/></svg>
            <svg><path d="M2 13 8 3l6 10M5 8q3-6 7 0" fill="none" stroke="#d0e8ff" stroke-width="2"/></svg>
            <svg><use href="#sw"/></svg>
            <svg><use href="#safe"/></svg>
            <time>10:02</time>
        </div>
        <div class="site-mark"><b>三维网</b>www.3dportal.cn</div>
    </div>
</body>
</html>
```

FILE: styles.css
```css
* {
    box-sizing: border-box;
}

body {
    margin: 0;
    height: 100vh;
    min-height: 700px;
    display: flex;
    flex-direction: column;
    overflow: hidden;
    font-family: "Noto Sans", "Noto Sans CJK SC", sans-serif;
    font-size: 12px;
    line-height: 14px;
    color: #000;
}

button {
    margin: 0;
    padding: 0;
    border: 0;
    background: none;
    font: inherit;
    color: inherit;
    display: flex;
    align-items: center;
    justify-content: center;
}

input, textarea {
    font: inherit;
    margin: 0;
    border-radius: 0;
    outline: 0;
}

svg {
    width: 16px;
    height: 16px;
    flex: none;
}

.defs {
    position: absolute;
    width: 0;
    height: 0;
}

/* title bar */
.titlebar {
    height: 30px;
    flex: none;
    display: flex;
    align-items: center;
    border-bottom: 1px solid #50546a;
    background: linear-gradient(#eeeffc, #d8dbe9 50%, #b3b7cc);
}

.brand {
    width: 126px;
    height: 29px;
    padding-left: 3px;
    display: flex;
    align-items: center;
    gap: 4px;
    background: linear-gradient(#e4e6f0, #c8cbd9 50%, #aeb2c4);
}

.brand-icon {
    width: 22px;
    height: 22px;
}

.brand-name {
    font-family: "Liberation Sans", sans-serif;
    font-style: italic;
    font-size: 13px;
    line-height: 16px;
}

.brand-arrow {
    width: 11px;
    height: 29px;
    background: linear-gradient(#a4a8c4, #5b608a);
}

.brand-arrow::before {
    content: "";
    border: 4px solid transparent;
    border-left: 5px solid #1d2150;
    border-right: 0;
}

.quick {
    display: flex;
    align-items: center;
    padding-left: 29px;
}

.quick button {
    width: 20px;
    height: 22px;
}

.quick .drop {
    width: 16px;
    color: #888b99;
}

.quick .dark {
    color: #20264a;
}

.quick .drop svg, .small svg {
    width: 8px;
    height: 8px;
}

.quick .wide {
    width: 23px;
    padding-right: 3px;
}

.doc-title {
    flex: 1;
    margin: 0;
    text-align: center;
    font-size: 12px;
    font-weight: normal;
    color: #333;
}

.help-search {
    width: 202px;
    height: 22px;
    display: flex;
    align-items: center;
    padding-left: 5px;
    border: 1px solid #5f6474;
    border-radius: 4px;
    background: linear-gradient(#dde0e8, #fff);
}

.help-search input {
    flex: 1;
    min-width: 0;
    padding: 0 0 0 4px;
    border: 0;
    background: none;
    color: #50545c;
}

.small {
    width: 15px;
}

.window-btns {
    display: flex;
    align-items: center;
    gap: 7px;
    padding: 0 5px 0 7px;
    color: #50545e;
}

.window-btns .small {
    width: 6px;
}

/* ribbon */
.ribbon {
    height: 74px;
    flex: none;
    display: flex;
    position: relative;
    padding-left: 6px;
    border-bottom: 2px solid #60647a;
    background: linear-gradient(#fcfdff, #eff0f7 50%, #d0d3e0);
    color: #a09f98;
    line-height: 13px;
}

.group {
    display: flex;
    padding: 2px 11px 0 0;
    margin-right: 1px;
}

.group + .group {
    border-left: 1px solid #c4c7d2;
}

.big {
    width: 46px;
    height: 69px;
    padding-top: 12px;
    flex-direction: column;
    justify-content: flex-start;
}

.big-wide {
    width: 50px;
}

.big-menu {
    width: 40px;
    padding-top: 5px;
    position: relative;
}

.big .more {
    position: absolute;
    bottom: 4px;
    width: 7px;
    height: 7px;
}

.big-latin {
    width: 58px;
    font-size: 11px;
}

.stack {
    display: flex;
    flex-direction: column;
    padding-left: 3px;
}

.stack button {
    height: 23px;
    gap: 7px;
    justify-content: flex-start;
}

.stack-next {
    padding-left: 10px;
}

.group-tight {
    padding-right: 8px;
}

.group-tight .big-menu {
    width: 38px;
}

.group-tight .stack {
    margin-left: 3px;
}

.group-ref {
    padding: 2px 0 0 4px;
}

.group-last {
    padding-left: 0;
}

.ds-logo {
    position: absolute;
    right: 9px;
    top: 2px;
    width: 72px;
    height: 70px;
    fill: #d0d6e6;
    opacity: .8;
}

/* workspace */
.workspace {
    flex: 1;
    min-height: 0;
    display: flex;
}

.side {
    width: 208px;
    flex: none;
    display: flex;
    flex-direction: column;
    position: relative;
    z-index: 1;
}

.cmd-tabs {
    display: flex;
    width: 312px;
    height: 20px;
    border-left: 1px solid #62667c;
}

.cmd-tabs button {
    width: 57px;
    flex: none;
    border: 1px solid #62667c;
    border-top: 0;
    border-left: 0;
    background: #b9bcd0;
    color: #40444e;
}

.cmd-tabs .on {
    width: 56px;
    background: #e3e5ee;
    border-bottom: 0;
    color: #000;
}

.cmd-tabs .t-wide {
    width: 66px;
}

.cmd-tabs .t-last {
    width: 75px;
}

.panel {
    flex: 1;
    min-height: 0;
    padding: 7px 3px 0 2px;
    border-right: 2px solid #686c82;
    border-bottom: 1px solid #8f93a4;
    background: #e0e3eb;
    border-top: 1px solid #8e92a6;
}

.mgr-tabs {
    display: flex;
    gap: 2px;
    height: 22px;
    border-bottom: 1px solid #8f93aa;
}

.mgr-tabs button {
    width: 26px;
    border: 1px solid #8f93aa;
    border-bottom: 0;
    border-radius: 4px 4px 0 0;
    background: #bfc2d4;
}

.mgr-tabs .on {
    height: 22px;
    background: #e9ebf3;
}

.pm-title {
    display: flex;
    align-items: center;
    height: 22px;
    margin-top: 3px;
    padding: 0 7px 0 1px;
    border: 1px solid #3d4262;
    background: linear-gradient(#7b7f98, #9ea1b4);
    color: #fff;
}

.pm-title h2 {
    flex: 1;
    margin: 0 0 0 3px;
    font-size: 16px;
    line-height: 20px;
    font-weight: bold;
}

.pm-title button {
    font-weight: bold;
    font-size: 14px;
}

.pm-confirm {
    display: flex;
    gap: 10px;
    padding: 5px 3px 15px;
}

.box {
    margin: 0 0 7px 2px;
    border: 1px solid #9599aa;
    background: #e6e7ef;
}

.box-closed {
    margin-bottom: 12px;
}

.box-closed .box-head {
    border-bottom: 0;
}

.box-head {
    height: 19px;
    display: flex;
    align-items: center;
    justify-content: space-between;
    padding: 0 5px 0 3px;
    border-bottom: 1px solid #9599aa;
    background: linear-gradient(#e6e8ef, #ccd0da 50%, #bcc1cd 50%, #ced2dc);
    font-weight: bold;
    color: #3a414e;
}

.box-head svg {
    width: 10px;
    height: 10px;
}

.box-body {
    display: flex;
    align-items: flex-start;
    padding: 3px 6px 7px 7px;
    gap: 9px;
}

.box-body svg {
    width: 18px;
    height: 18px;
    margin-top: 3px;
}

.box-body input, .box-body textarea {
    flex: 1;
    min-width: 0;
    padding: 0 4px;
    border: 1px solid #848a99;
    background: #fff;
    color: #444;
}

.box-body input {
    height: 23px;
    padding-bottom: 2px;
}

.box-body textarea {
    height: 57px;
    resize: none;
}

.box-body .active {
    border: 2px solid #70b1dc;
    background: #cce4f8;
}

.options {
    height: 91px;
    display: flex;
    flex-direction: column;
    padding: 0 0 4px 34px;
}

.options label {
    flex: 1;
    display: flex;
    align-items: center;
}

.options .radio {
    padding-left: 2px;
}

.options input {
    appearance: none;
    width: 13px;
    height: 13px;
    margin-right: 3px;
    border: 1px solid #1c5180;
    background: linear-gradient(135deg, #dcdcd7, #fff);
    display: flex;
    align-items: center;
    justify-content: center;
}

.options input[type="radio"] {
    border-radius: 50%;
}

.options input[type="checkbox"]:checked::before {
    content: "";
    width: 4px;
    height: 7px;
    margin-bottom: 2px;
    border: solid #21a121;
    border-width: 0 2px 2px 0;
    transform: rotate(40deg);
}

.options input[type="radio"]:checked::before {
    content: "";
    width: 5px;
    height: 5px;
    border-radius: 50%;
    background: #36a336;
}

/* graphics area */
.view {
    flex: 1;
    min-width: 0;
    position: relative;
    background:
        radial-gradient(ellipse 85% 62% at 15% 0%, #fff 50%, rgba(255, 255, 255, 0)),
        linear-gradient(#eceef4, #e2e6ef 30%, #dce0eb 50%, #eaecf4 63%, #f9fafc 74%, #fdfdfe);
}

.model {
    position: absolute;
    inset: 0;
    width: 100%;
    height: 100%;
}

.axis {
    font-family: "Liberation Serif", serif;
    font-size: 9px;
}

.ax {
    fill: #c02020;
}

.ay {
    fill: #1e7a2c;
}

.az {
    fill: #1414b0;
}

.splitter {
    position: absolute;
    left: -2px;
    top: 283px;
    width: 10px;
    height: 29px;
    border: 1px solid #686c82;
    border-left: 0;
    border-radius: 0 4px 4px 0;
    background: #d5d7e5;
    color: #3c4170;
    font-family: "DejaVu Sans", sans-serif;
    font-size: 8px;
    line-height: 8px;
    z-index: 2;
}

.tree {
    position: absolute;
    left: 1px;
    top: 22px;
    display: flex;
    align-items: center;
    gap: 5px;
    height: 20px;
}

.tree svg {
    margin-left: 1px;
}

.tree .plus {
    width: 9px;
    height: 9px;
    border: 1px solid #777;
    background: #fff;
    line-height: 7px;
    font-size: 10px;
}

.tree .state {
    margin-left: 9px;
}

.hud {
    position: absolute;
    left: 439px;
    top: 6px;
    display: flex;
    gap: 7px;
    color: #444;
}

.hud .has-menu {
    width: 26px;
    justify-content: space-between;
}

.hud .mini {
    width: 7px;
    height: 7px;
}

.doc-btns {
    position: absolute;
    right: 11px;
    top: 6px;
    display: flex;
    gap: 7px;
    color: #70747e;
}

.corner-ok {
    position: absolute;
    right: 74px;
    top: 34px;
}

.corner-ok svg {
    width: 26px;
    height: 22px;
}

.corner-cancel {
    position: absolute;
    right: 43px;
    top: 63px;
}

.corner-cancel svg {
    width: 24px;
    height: 24px;
}

.task-pane {
    position: absolute;
    right: 0;
    top: 60px;
    display: flex;
    flex-direction: column;
}

.task-pane button {
    width: 25px;
    height: 24px;
    border: 1px solid #7d8299;
    border-right: 0;
    border-radius: 4px 0 0 4px;
    background: #b9bccf;
}

.task-pane .on {
    background: #eceef5;
}

.tooltip {
    position: absolute;
    left: 740px;
    top: 378px;
    padding: 0 2px;
    border: 1px solid #000;
    background: #e8e9f6;
    color: #343a78;
    box-shadow: 2px 2px 2px rgba(0, 0, 0, .5);
}

/* model tabs and status */
.model-tabs {
    height: 16px;
    flex: none;
    display: flex;
    border-top: 1px solid #000;
    border-bottom: 1px solid #5c6074;
    background: #dfe2e9;
}

.nav-btns {
    display: flex;
    padding: 0 3px;
}

.nav-btns button {
    width: 16px;
    border: 1px solid #8a8ea2;
    background: #b4b7ca;
}

.nav-btns svg {
    width: 10px;
    height: 10px;
    fill: #858a9e;
}

.m-tab {
    width: 44px;
    border: 1px solid #40445a;
    border-top: 0;
    background: #b9bccf;
}

.m-tab.on {
    background: #e6e8f0;
}

.m-long {
    width: 78px;
    padding-right: 6px;
}

.status {
    height: 23px;
    flex: none;
    display: flex;
    align-items: center;
    padding: 0 16px 4px 2px;
    background: linear-gradient(#c9cce0, #a6aab4);
}

.status-msg {
    flex: 1;
}

.bars {
    width: 9px;
    height: 13px;
    margin-right: 5px;
    border-left: 1px solid #fff;
    border-right: 1px solid #fff;
}

.bars-three {
    width: 17px;
    margin: 0 18px 0 6px;
    background: linear-gradient(#fff, #fff) 7px 0 / 1px 100% no-repeat;
}

.custom {
    color: #8d909c;
    gap: 8px;
}

.tri {
    font-size: 8px;
    font-family: "DejaVu Sans", sans-serif;
}

.moon {
    width: 5px;
    height: 10px;
    margin-left: 82px;
    border-radius: 5px 0 0 5px;
    border: 2px solid #a67c10;
    border-right: 0;
    background: #f8d860;
}

/* taskbar */
.taskbar {
    height: 30px;
    flex: none;
    display: flex;
    align-items: center;
    position: relative;
    background: linear-gradient(#5a94ea, #2a63dc 12%, #2058d4 50%, #2460e0 90%, #1a44a8);
}

.start {
    width: 97px;
    height: 29px;
    padding-right: 10px;
    gap: 6px;
    border-radius: 0 10px 10px 0;
    background: linear-gradient(#7cc47a, #39903a 15%, #2f8a30 60%, #3aa23a 85%, #226c24);
    color: #fff;
    font-size: 18px;
    line-height: 22px;
    font-style: italic;
    text-shadow: 1px 1px 2px #163c16;
}

.start svg {
    width: 20px;
    height: 20px;
}

.ql-box {
    width: 41px;
    height: 24px;
    margin: 0 6px 0 4px;
    display: flex;
    justify-content: center;
    border: 1px solid #4a86ee;
}

.ql {
    display: flex;
    align-items: center;
    gap: 8px;
    width: 90px;
}

.ql .ql-more {
    align-self: flex-start;
    margin-left: 2px;
    color: #fff;
    line-height: 10px;
}

.tasks {
    flex: 1;
    display: flex;
    gap: 2px;
}

.tasks button {
    width: 158px;
    height: 25px;
    padding-left: 9px;
    gap: 4px;
    justify-content: flex-start;
    border-radius: 3px;
    background: linear-gradient(#5c9cf8, #3a7df0 20%, #3a7cf0 85%, #2c66cc);
    color: #fff;
    font-family: "Liberation Mono", monospace;
    font-size: 10px;
}

.tasks .pressed {
    padding-top: 3px;
    background: #1c4fb4;
}

.tasks .alert {
    background: linear-gradient(#f0a040, #e07c0c 20%, #dd7808 85%, #b86208);
}

.han {
    font-family: "Noto Sans CJK SC", sans-serif;
    font-size: 12px;
}

.kbd {
    margin-right: 5px;
    width: 14px;
}

.desk-search {
    width: 136px;
    height: 20px;
    display: flex;
}

.desk-search input {
    flex: 1;
    min-width: 0;
    padding: 0 4px 2px;
    border: 0;
    background: #fff;
    color: #94928a;
}

.desk-search button {
    width: 24px;
    background: #dfeafa;
}

.tray {
    width: 149px;
    height: 29px;
    margin-left: 20px;
    display: flex;
    align-items: center;
    gap: 2px;
    background: linear-gradient(#4cb4f4, #1290e8 15%, #1590ec 85%, #0e6cc0);
    color: #fff;
}

.tray-arrow {
    width: 17px;
    height: 17px;
    margin-left: -9px;
    border-radius: 50%;
    background: #3c8ce8;
    text-align: center;
}

.tray time {
    margin-left: 6px;
}

.site-mark {
    position: absolute;
    right: 18px;
    bottom: 2px;
    font-family: "DejaVu Sans", "Noto Sans CJK SC", sans-serif;
    font-size: 17px;
    line-height: 20px;
    color: #fff;
    -webkit-text-stroke: 3px #e02830;
    paint-order: stroke fill;
}

.site-mark b {
    font-size: 19px;
    font-weight: normal;
}
```
